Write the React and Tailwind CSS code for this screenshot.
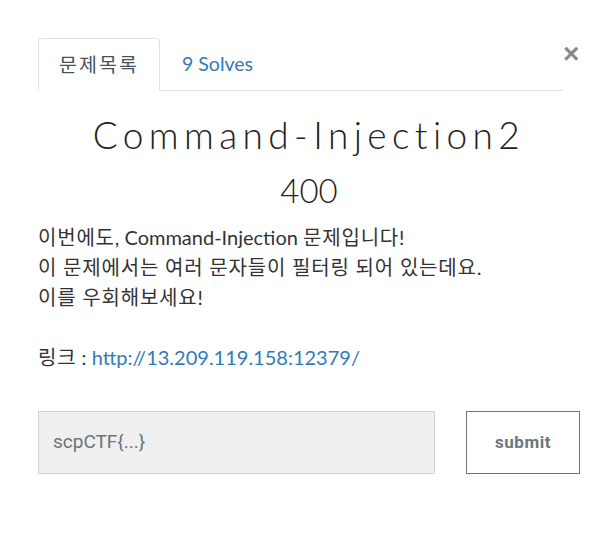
import React from "react";

export default function App() {
  const body = { fontFamily: "Lato, 'Noto Sans CJK KR', sans-serif" };
  const K = ({ children }) => <span className="tracking-[0.8px]">{children}</span>;
  return (
    <div className="w-[616px] h-[533px] bg-white relative" style={body}>
      <button className="absolute left-[563px] top-[40px] text-[28px] leading-none font-bold text-[#888] font-['Liberation_Sans',sans-serif]">
        ×
      </button>
      <div className="pt-[38px] pl-[38px] pr-[53px]">
        <div className="flex border-b border-[#dee2e6]">
          <div className="-mb-px h-[53px] w-[122px] flex items-center justify-center border border-[#dee2e6] border-b-white rounded-t-[4px] bg-white text-[19.5px] tracking-[2px] text-[#495057]">
            문제목록
          </div>
          <div className="h-[52px] flex items-center pl-[22px] text-[19.5px] text-[#337ab7]">
            9 Solves
          </div>
        </div>
      </div>
      <div className="pl-[38px] pr-[36px]">
        <h1 className="mt-[20px] text-center text-[37px] leading-[48px] font-light tracking-[5.4px] text-[#222]" style={{ fontFamily: "Lato, sans-serif" }}>
          Command-Injection2
        </h1>
        <div className="mt-[11px] text-center text-[33px] leading-[40px] font-light text-[#222]">400</div>
        <div className="mt-[12px] text-[20px] leading-[30px] text-[#333]">
          <p><K>이번에도</K>, Command-Injection <K>문제입니다</K>!</p>
          <p><K>이 문제에서는 여러 문자들이 필터링 되어 있는데요</K>.</p>
          <p><K>이를 우회해보세요</K>!</p>
          <p>&nbsp;</p>
          <p>
            <K>링크</K> : <a className="text-[#337ab7]">http://13.209.119.158:12379/</a>
          </p>
        </div>
        <div className="mt-[39px] flex">
          <div className="shrink-0 w-[397px] h-[63px] bg-[#efefef] border border-[#ced4da] flex items-center pl-[14px] text-[19px] text-[#6c757d]" style={{ fontFamily: "Roboto, sans-serif" }}>
            scpCTF{"{...}"}
          </div>
          <button className="shrink-0 ml-[31px] w-[114px] h-[63px] border border-[#6c757d] text-[17px] font-bold text-[#6c757d] tracking-[0.5px]" style={{ fontFamily: "Roboto, sans-serif" }}>
            submit
          </button>
        </div>
      </div>
    </div>
  );
}
